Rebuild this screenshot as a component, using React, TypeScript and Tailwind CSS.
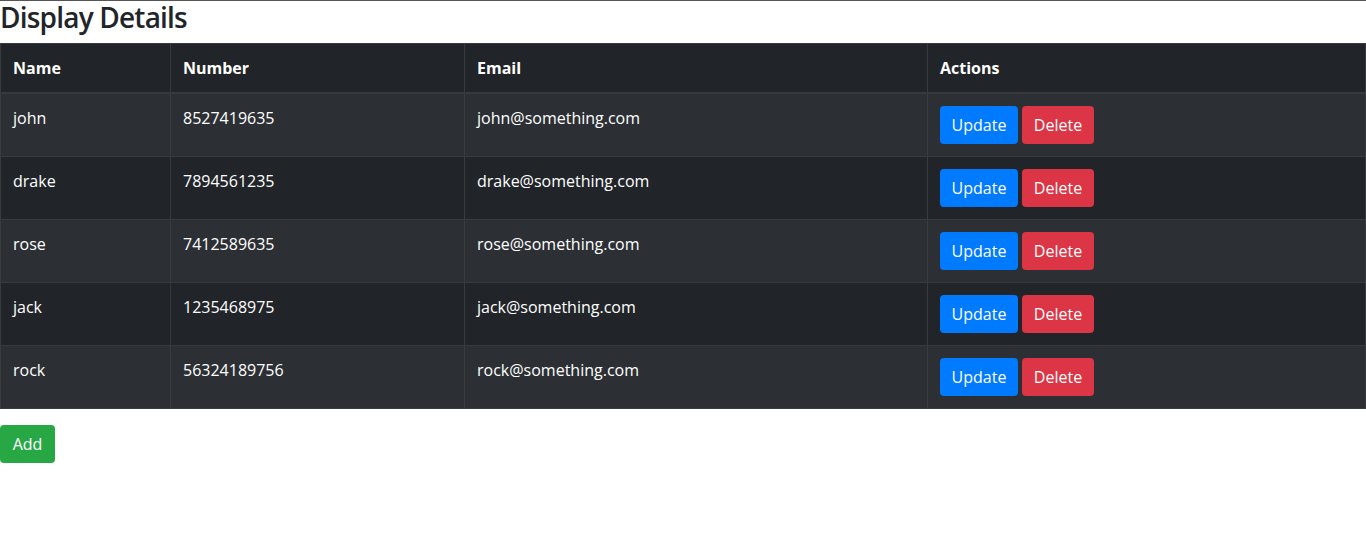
import React from 'react'

// table rows
const people = [
  { name: 'john', number: '8527419635', email: 'john@something.com' },
  { name: 'drake', number: '7894561235', email: 'drake@something.com' },
  { name: 'rose', number: '7412589635', email: 'rose@something.com' },
  { name: 'jack', number: '1235468975', email: 'jack@something.com' },
  { name: 'rock', number: '56324189756', email: 'rock@something.com' },
]

const font = { fontFamily: '"Segoe UI", "Open Sans", "Noto Sans", sans-serif' }

export default function App() {
  return (
    <div className="min-h-screen bg-white border-t border-[#555555] text-[#212529]" style={font}>
      <h3 className="text-[28px] leading-[1.2] font-semibold tracking-[-0.8px] mb-2">Display Details</h3>

      <table className="w-full border-collapse border border-[#373b3e] text-white text-base leading-6">
        <thead>
          <tr className="bg-[#212529]">
            <th className="w-[170px] text-left font-bold p-3 border border-b-2 border-[#373b3e]">Name</th>
            <th className="w-[294px] text-left font-bold p-3 border border-b-2 border-[#373b3e]">Number</th>
            <th className="w-[463px] text-left font-bold p-3 border border-b-2 border-[#373b3e]">Email</th>
            <th className="text-left font-bold p-3 border border-b-2 border-[#373b3e]">Actions</th>
          </tr>
        </thead>
        <tbody>
          {people.map((p, i) => (
            <tr key={p.name} className={i % 2 === 0 ? 'bg-[#2c3034]' : 'bg-[#212529]'}>
              <td className="align-top p-3 border border-[#373b3e]">{p.name}</td>
              <td className="align-top p-3 border border-[#373b3e]">{p.number}</td>
              <td className="align-top p-3 border border-[#373b3e]">{p.email}</td>
              <td className="align-top p-3 border border-[#373b3e]">
                <div className="flex gap-1">
                  <button className="h-[38px] w-[78px] rounded bg-[#007bff] text-white">Update</button>
                  <button className="h-[38px] w-[72px] rounded bg-[#dc3545] text-white">Delete</button>
                </div>
              </td>
            </tr>
          ))}
        </tbody>
      </table>

      <button className="mt-4 h-[38px] w-[55px] rounded bg-[#28a745] text-white">Add</button>
    </div>
  )
}
